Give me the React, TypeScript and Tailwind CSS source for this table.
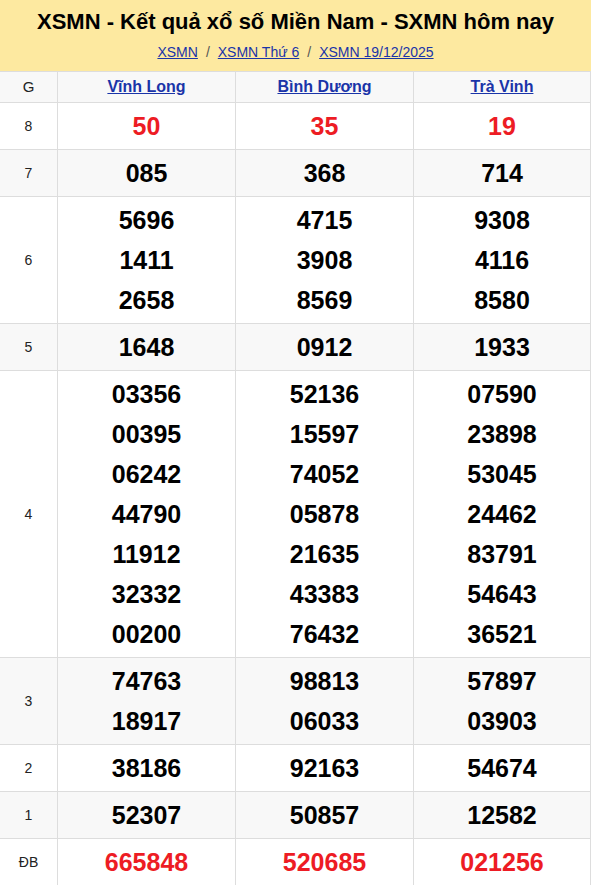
import React from 'react'

const PROVINCES = ['Vĩnh Long', 'Bình Dương', 'Trà Vinh']

const ROWS: { label: string; red?: boolean; values: string[][] }[] = [
  { label: '8', red: true, values: [['50'], ['35'], ['19']] },
  { label: '7', values: [['085'], ['368'], ['714']] },
  { label: '6', values: [['5696', '1411', '2658'], ['4715', '3908', '8569'], ['9308', '4116', '8580']] },
  { label: '5', values: [['1648'], ['0912'], ['1933']] },
  {
    label: '4',
    values: [
      ['03356', '00395', '06242', '44790', '11912', '32332', '00200'],
      ['52136', '15597', '74052', '05878', '21635', '43383', '76432'],
      ['07590', '23898', '53045', '24462', '83791', '54643', '36521'],
    ],
  },
  { label: '3', values: [['74763', '18917'], ['98813', '06033'], ['57897', '03903']] },
  { label: '2', values: [['38186'], ['92163'], ['54674']] },
  { label: '1', values: [['52307'], ['50857'], ['12582']] },
  { label: 'ĐB', red: true, values: [['665848'], ['520685'], ['021256']] },
]

export default function App() {
  return (
    <div className="w-[591px] bg-white" style={{ fontFamily: '"Liberation Sans", Arial, sans-serif' }}>
      {/* Header */}
      <div className="bg-[#fde9a0] h-[71px] flex flex-col items-center pt-[8px]">
        <h1 className="text-[22px] font-bold text-black leading-[28px]">XSMN - Kết quả xổ số Miền Nam - SXMN hôm nay</h1>
        <div className="mt-[8px] text-[14px] leading-[16px] text-[#555] flex items-center gap-[8px]">
          <a className="text-[#1a34a8] underline">XSMN</a>
          <span>/</span>
          <a className="text-[#1a34a8] underline">XSMN Thứ 6</a>
          <span>/</span>
          <a className="text-[#1a34a8] underline">XSMN 19/12/2025</a>
        </div>
      </div>

      {/* Results table */}
      <div className="border-t border-r border-[#ddd]">
        <div className="grid grid-cols-[57px_178px_178px_1fr] bg-[#f8f8f8] border-b border-[#ddd] h-[31px]">
          <div className="flex items-center justify-center text-[15px] text-[#222]">G</div>
          {PROVINCES.map(p => (
            <div key={p} className="border-l border-[#ddd] flex items-center justify-center">
              <a className="text-[16px] font-bold text-[#1a34a8] underline">{p}</a>
            </div>
          ))}
        </div>
        {ROWS.map((r, i) => (
          <div
            key={r.label}
            className={`grid grid-cols-[57px_178px_178px_1fr] border-b border-[#ddd] ${i % 2 === 1 ? 'bg-[#f8f8f8]' : 'bg-white'}`}
          >
            <div className="flex items-center justify-center text-[14px] text-[#222]">{r.label}</div>
            {r.values.map((col, j) => (
              <div key={j} className="border-l border-[#ddd] py-[3px] flex flex-col items-center">
                {col.map((n, k) => (
                  <div
                    key={k}
                    className={`text-[25px] font-bold leading-[40px] ${r.red ? 'text-[#ed1c24]' : 'text-black'}`}
                  >
                    {n}
                  </div>
                ))}
              </div>
            ))}
          </div>
        ))}
      </div>
    </div>
  )
}
